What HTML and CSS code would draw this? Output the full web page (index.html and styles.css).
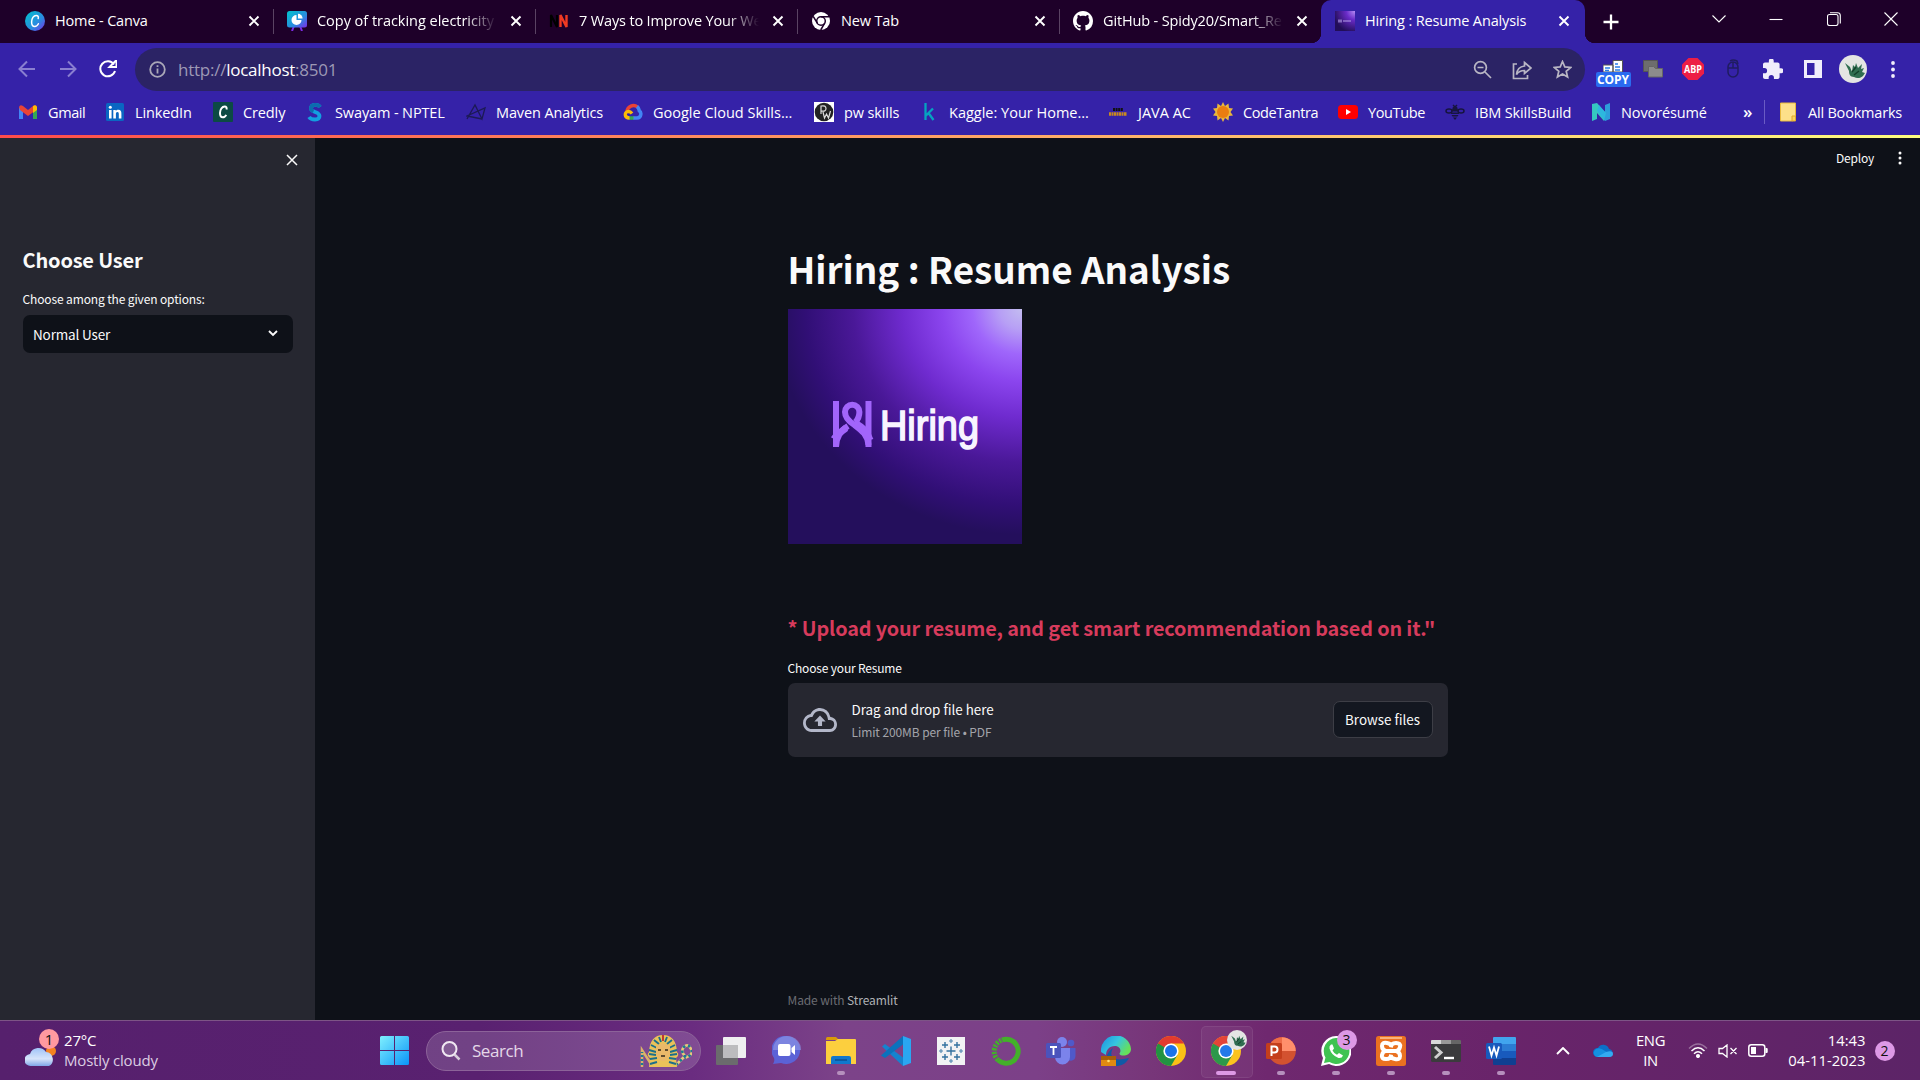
FILE: index.html
```html
<!DOCTYPE html>
<html lang="en">
<head>
<meta charset="utf-8">
<title>Hiring : Resume Analysis</title>
<link rel="stylesheet" href="styles.css">
</head>
<body>
<svg class="defs" width="0" height="0">
  <defs>
    <symbol id="close" viewBox="0 0 12 12"><path d="M1.5 1.5l9 9M10.5 1.5l-9 9" stroke="currentColor" stroke-width="1.9" fill="none"/></symbol>
    <symbol id="chrome" viewBox="0 0 30 30">
      <circle cx="15" cy="15" r="15" fill="#fbc116"/>
      <path d="M2 7.5A15 15 0 0 1 28 7.5H15L8.5 18.7z" fill="#e33b2e"/>
      <path d="M2 7.5A15 15 0 0 0 15 30l6.5-11.2L15 15z" fill="#229342"/>
      <circle cx="15" cy="15" r="7.6" fill="#fff"/><circle cx="15" cy="15" r="6" fill="#1a73e8"/>
    </symbol>
    <symbol id="dragon" viewBox="0 0 28 28">
      <circle cx="14" cy="14" r="14" fill="#e4e5e3"/>
      <path d="M6 8l5 4 2 5 1-7 2 2 1-4 2 5 4-4-1 5 3-1-2 4 3 1-2 3c-2 2-6 3-9 1-4 0-5-3-5-6z" fill="#2f6d50"/>
      <path d="M13 17l4-5M15 20l5-4" stroke="#123f2a" stroke-width="1.4"/>
    </symbol>
  </defs>
</svg>

<header class="browser">
  <div class="tabs">
    <div class="tab">
      <svg class="fav" viewBox="0 0 20 20"><defs><linearGradient id="cv" x1="0" y1="0" x2="1" y2="1"><stop offset="0" stop-color="#00c4cc"/><stop offset=".6" stop-color="#2a8be0"/><stop offset="1" stop-color="#7d2ae8"/></linearGradient></defs><circle cx="10" cy="10" r="10" fill="url(#cv)"/><path d="M13.2 7.6c.6-2-.4-3.2-2-3.2C8.5 4.4 6.6 7.6 6.600 11c0 2.700 1.200 4.500 3.100 4.500 1.700 0 3-1.200 3.700-2.700" stroke="#fff" stroke-width="1.5" fill="none" stroke-linecap="round"/></svg>
      <span class="tab-title">Home - Canva</span><svg class="tab-x"><use href="#close"/></svg>
    </div>
    <div class="tab">
      <svg class="fav" viewBox="0 0 20 20"><path d="M7 15l-2 5M13 15l2 5" stroke="#7d2ae8" stroke-width="2"/><rect width="20" height="16.5" rx="2.5" fill="url(#cv)"/><path d="M9.5 4v5h5a5 5 0 1 1-5-5z" fill="#fff"/><path d="M11 2.800a4.600 4.600 0 0 1 4.600 4.600H11z" fill="#fff"/></svg>
      <span class="tab-title fade wide">Copy of tracking electricity</span><svg class="tab-x"><use href="#close"/></svg>
    </div>
    <div class="tab">
      <svg class="fav" viewBox="0 0 20 20"><path d="M2 16V4l6 12V4" stroke="#000" stroke-width="2.2" fill="none"/><path d="M11.5 16V4l6 12V4" stroke="#f03a22" stroke-width="2.4" fill="none"/></svg>
      <span class="tab-title fade">7 Ways to Improve Your We</span><svg class="tab-x"><use href="#close"/></svg>
    </div>
    <div class="tab">
      <svg class="fav" viewBox="0 0 20 20"><circle cx="10" cy="10" r="9" fill="#fff"/><circle cx="10" cy="10" r="4.300" fill="#fff" stroke="#1e0029" stroke-width="1.5"/><path d="M10 5.700h8M6.300 12.200L2.200 5.300M13.700 12.200L9.700 19" stroke="#1e0029" stroke-width="1.5"/></svg>
      <span class="tab-title">New Tab</span><svg class="tab-x"><use href="#close"/></svg>
    </div>
    <div class="tab">
      <svg class="fav" viewBox="0 0 16 16"><path fill="#fff" d="M8 0C3.580 0 0 3.580 0 8c0 3.540 2.290 6.530 5.470 7.590.4.070.55-.17.55-.38 0-.19-.01-.82-.01-1.490-2.010.37-2.530-.49-2.690-.94-.09-.23-.48-.94-.82-1.130-.28-.15-.68-.52-.01-.53.63-.01 1.080.58 1.230.82.72 1.210 1.870.87 2.330.66.07-.52.28-.87.51-1.070-1.780-.2-3.640-.89-3.640-3.950 0-.87.31-1.590.82-2.150-.08-.2-.36-1.020.08-2.120 0 0 .67-.21 2.200.82.64-.18 1.320-.27 2-.27s1.360.09 2 .27c1.530-1.040 2.200-.82 2.200-.82.44 1.100.16 1.920.08 2.120.51.56.82 1.270.82 2.150 0 3.070-1.870 3.750-3.650 3.950.29.25.54.73.54 1.480 0 1.070-.01 1.930-.01 2.200 0 .21.15.46.55.38A8.010 8.010 0 0 0 16 8c0-4.420-3.580-8-8-8z"/></svg>
      <span class="tab-title fade">GitHub - Spidy20/Smart_Re</span><svg class="tab-x"><use href="#close"/></svg>
    </div>
    <div class="tab active">
      <svg class="fav" viewBox="0 0 20 20"><defs><radialGradient id="lg" cx="1" cy="0" r="1.100"><stop offset="0" stop-color="#b48cf5"/><stop offset=".4" stop-color="#6a2bc8"/><stop offset="1" stop-color="#220e58"/></radialGradient></defs><rect width="20" height="20" fill="url(#lg)"/><path d="M4 8.500v3M6 8.500v3M8 10h8" stroke="#b59fe8" stroke-width="1.2"/></svg>
      <span class="tab-title">Hiring : Resume Analysis</span><svg class="tab-x"><use href="#close"/></svg>
    </div>
    <div class="new-tab"><svg width="16" height="16" viewBox="0 0 16 16"><path d="M8 .5v15M.5 8h15" stroke="#fff" stroke-width="2.3"/></svg></div>
    <div class="win-controls">
      <svg width="14" height="14" viewBox="0 0 14 14"><path d="M.5 3.5L7 10l6.5-6.5"/></svg>
      <svg width="14" height="14" viewBox="0 0 14 14"><path d="M.5 7.500h13"/></svg>
      <svg width="14" height="14" viewBox="0 0 14 14"><rect x=".5" y="2.5" width="10.5" height="11" rx="2"/><path d="M3 .7h7.500q2.800 0 2.800 2.800v8"/></svg>
      <svg width="14" height="14" viewBox="0 0 14 14"><path d="M.5.5l13 13M13.5.5l-13 13"/></svg>
    </div>
  </div>

  <div class="toolbar">
    <div class="nav">
      <svg class="dim" width="18" height="18" viewBox="0 0 18 18"><path d="M17 9H2M9 1.500L1.500 9 9 16.500"/></svg>
      <svg class="dim" width="18" height="18" viewBox="0 0 18 18"><path d="M1 9h15M9 1.500L16.500 9 9 16.500"/></svg>
      <svg class="reload" width="18" height="18" viewBox="0 0 18 18"><path d="M15 4.500A7.500 7.500 0 1 0 16 11"/><path d="M17.500 0v7H10.500z" fill="#fff" stroke="none"/></svg>
    </div>
    <div class="omnibox">
      <svg class="info" width="17" height="17" viewBox="0 0 17 17"><circle cx="8.500" cy="8.500" r="7.300"/><path d="M8.500 7.500v5M8.500 4.300v1.700"/></svg>
      <span class="url">http://<b>localhost</b>:8501</span>
      <div class="omni-actions">
        <svg width="19" height="19" viewBox="0 0 19 19"><circle cx="7.500" cy="7.500" r="5.900"/><path d="M12 12l6 6M4.500 7.500h6"/></svg>
        <svg width="20" height="20" viewBox="0 0 20 20"><path d="M5 4H1.500v14.500h14V15M12.500 2.500L19 8l-6.500 5.500V10.500c-4 0-6 1-8 4 .5-5 3.500-8 8-8.500z"/></svg>
        <svg width="19" height="19" viewBox="0 0 19 19"><path d="M9.500 1.500l2.300 5.400 5.900.5-4.500 3.900 1.400 5.700-5.100-3-5.100 3 1.400-5.700-4.500-3.900 5.900-.5z"/></svg>
      </div>
    </div>
    <div class="exts">
      <div class="copy"><svg width="20" height="12" viewBox="0 0 20 12"><path d="M0 5h10v7H0zM10 .5h9.500v11.500H10z" fill="#fff" stroke="#555" /><path d="M2 8h5M2 10.500h4M12 4h3M12 7h5M12 10h5" stroke="#2a7de8" stroke-width="1.4"/></svg><span>COPY</span></div>
      <svg width="20" height="18" viewBox="0 0 20 18"><path d="M.5.500h14v11H.5z" fill="#6d6d6d" stroke="#555"/><path d="M5.500 6.500h5l2 2h7v8.500h-14z" fill="#8c8c8c" stroke="#666"/></svg>
      <svg width="22" height="22" viewBox="0 0 22 22"><path d="M6.500 0h9L22 6.500v9L15.500 22h-9L0 15.500v-9z" fill="#ed1e45"/><text x="11" y="14.700" class="abp" textLength="18" lengthAdjust="spacingAndGlyphs">ABP</text></svg>
      <svg width="14" height="20" viewBox="0 0 14 20"><path d="M2 8a5 5 0 0 1 10 0v5a5 5 0 0 1-10 0zM2 9h10M7 3v6M4 2q3-2 7 0l1 3" fill="none" stroke="#1f1c60" stroke-width="1.5"/></svg>
      <svg width="20" height="20" viewBox="2 1.500 20.500 20.500"><path fill="#f1eefb" d="M20.500 11H19V7c0-1.100-.9-2-2-2h-4V3.500a2.500 2.500 0 0 0-5 0V5H4c-1.100 0-2 .9-2 2v3.800h1.500a2.700 2.700 0 0 1 0 5.400H2V20c0 1.100.9 2 2 2h3.800v-1.500a2.700 2.700 0 0 1 5.400 0V22H17c1.100 0 2-.9 2-2v-4h1.500a2.500 2.500 0 0 0 0-5z"/></svg>
      <svg width="18" height="18" viewBox="0 0 18 18"><path fill="#f1eefb" fill-rule="evenodd" d="M0 0h18v18H0zM3 3v12h7.500V3z"/></svg>
      <svg width="28" height="28"><use href="#dragon"/></svg>
      <svg width="4" height="17" viewBox="0 0 4 17"><g fill="#f1eefb"><circle cx="2" cy="2" r="1.900"/><circle cx="2" cy="8.500" r="1.900"/><circle cx="2" cy="15" r="1.900"/></g></svg>
    </div>
  </div>

  <div class="bookmarks">
    <div class="bm"><svg viewBox="0 0 20 20"><path d="M1 17V5l4 3v9z" fill="#4285f4"/><path d="M19 17V5l-4 3v9z" fill="#34a853"/><path d="M1 5q1-3 4-1l5 4 5-4q3-2 4 1l-1 3-8 6-8-6z" fill="#ea4335"/><path d="M15 4q3-2 4 1v3l-4 3z" fill="#fbbc04"/></svg>Gmail</div>
    <div class="bm"><svg viewBox="0 0 20 20"><rect x="1" y="1" width="18" height="18" rx="1.5" fill="#0a66c2"/><path d="M4 8h2.600v8.500H4zM8.300 8h2.500v1.200c.5-.9 1.400-1.400 2.500-1.400 2.600 0 3.100 1.700 3.100 3.900v4.800h-2.600v-4.300c0-1.100 0-2.300-1.400-2.300s-1.500 1.100-1.500 2.200v4.400H8.300z" fill="#fff"/><circle cx="5.300" cy="5.300" r="1.500" fill="#fff"/></svg>LinkedIn</div>
    <div class="bm"><svg viewBox="0 0 20 20"><rect width="20" height="20" rx="1" fill="#0c4a44"/><path d="M13.500 7.500c.5-2-.3-3-1.800-3C9 4.500 7 7.700 7 11c0 2.700 1 4.300 2.700 4.300 1.500 0 2.800-1 3.500-2.500" stroke="#fff" stroke-width="2" fill="none"/></svg>Credly</div>
    <div class="bm"><svg viewBox="0 0 20 20"><path d="M15 5C13 2 6 2 6 6.500S14.500 9 14.500 14 6 18 4 15" stroke="#139fe0" stroke-width="3.800" fill="none"/><path d="M15 5C13 2 6 2 6 6.500q0 2 2.500 2.800" stroke="#0c6cae" stroke-width="3.800" fill="none"/></svg>Swayam - NPTEL</div>
    <div class="bm"><svg viewBox="0 0 20 20"><path d="M1 17L9 3l7 14L19 6 1 14l15 3" stroke="#1c1a55" stroke-width="1.3" fill="none"/></svg>Maven Analytics</div>
    <div class="bm"><svg viewBox="0 0 20 20"><path d="M4 9.500A6.500 6.500 0 0 1 14.500 5" stroke="#ea4335" stroke-width="3.5" fill="none"/><path d="M14 4.500c2 1.500 2 3.500 2.300 4.300 2.200 1 2.500 7.200-2.300 7.200h-4" stroke="#4285f4" stroke-width="3.5" fill="none"/><path d="M10.500 16H6" stroke="#34a853" stroke-width="3.5"/><path d="M6.500 16C1 16 1 9.500 5.500 9.500q2 0 3.500 2" stroke="#fbbc05" stroke-width="3.3" fill="none"/></svg><span class="wide">Google Cloud Skills...</span></div>
    <div class="bm"><svg viewBox="0 0 20 20"><rect width="20" height="20" fill="#fff"/><circle cx="10" cy="10" r="9.300" fill="#222"/><path d="M7 12V4q5-1 5 2.500T7 9M9 10l1.500 6 2-4 2 4L16.500 9" stroke="#ddd" stroke-width="1.2" fill="none"/></svg>pw skills</div>
    <div class="bm"><svg viewBox="0 0 20 20"><path d="M6.500 1v17M14 6.500l-7 7M9.500 11l5 7" stroke="#06a3c0" stroke-width="2.3" fill="none"/></svg><span class="wide">Kaggle: Your Home...</span></div>
    <div class="bm"><svg viewBox="0 0 20 20"><path d="M5 7.500h10" stroke="#111" stroke-width="3" stroke-dasharray="2 .6"/><path d="M1 12h18" stroke="#c98a1e" stroke-width="3.4" stroke-dasharray="2 .5"/></svg><span class="wide">JAVA AC</span></div>
    <div class="bm"><svg viewBox="0 0 20 20"><path d="M10 0l2 4 3.500-2.500L16 6l4 .5L17.500 10l2.500 3.500-4 .5-.5 4.500L12 16l-2 4-2-4-3.500 2.500L4 14l-4-.5L2.500 10 0 6.500 4 6l.5-4.500L8 4z" fill="#e9b63c"/><circle cx="10" cy="10" r="6" fill="#ea7d10"/></svg><span class="tight">CodeTantra</span></div>
    <div class="bm"><svg viewBox="0 0 20 20"><rect y="3" width="20" height="14" rx="3.5" fill="#f00"/><path d="M8 7v6l5-3z" fill="#fff"/></svg><span class="tight">YouTube</span></div>
    <div class="bm"><svg viewBox="0 0 20 20"><g fill="none" stroke="#17153f" stroke-width="1.5"><path d="M8 3l2 2 2-2"/><ellipse cx="4" cy="9" rx="3" ry="2"/><ellipse cx="16" cy="9" rx="3" ry="2"/></g><path d="M10 4.500q3 0 2.500 2.500l1.500 1.500v1H6v-1L7.500 7Q7 4.500 10 4.500zM6 10.500h8v1.500H6zM6.500 13h7l-1 1.500h-5zM8 15.500h4L10 18z" fill="#17153f"/></svg>IBM SkillsBuild</div>
    <div class="bm"><svg viewBox="0 0 20 20"><path d="M1 2l5-1 9 10-2 8L6 11v6l-5 2z" fill="#35c8c0"/><path d="M14 3l5-2v16l-5 2L6 9l2-6 6 7z" fill="#2bb4e4" opacity=".85"/></svg>Novorésumé</div>
    <span class="more">»</span>
    <div class="all"><svg viewBox="0 0 20 20"><path d="M2.500 1h15v13l-3 5h-12z" fill="#fde08a" stroke="#e8b93c"/><path d="M14 19v-5h3.500v5z" fill="#fbd35c" stroke="#e0a92c"/></svg>All Bookmarks</div>
  </div>
</header>

<div class="app">
  <aside class="sidebar">
    <svg class="side-x" width="12" height="12" viewBox="0 0 12 12"><path d="M1 1l10 10M11 1L1 11" stroke="#fafafa" stroke-width="1.5"/></svg>
    <h2>Choose User</h2>
    <label>Choose among the given options:</label>
    <div class="select">Normal User<svg width="10" height="7" viewBox="0 0 10 7"><path d="M1 1l4 4 4-4" stroke="#fafafa" stroke-width="1.9" fill="none"/></svg></div>
  </aside>
  <main>
    <div class="app-bar"><span>Deploy</span><svg width="4" height="14" viewBox="0 0 4 14"><g fill="#fafafa"><circle cx="2" cy="2" r="1.500"/><circle cx="2" cy="7" r="1.500"/><circle cx="2" cy="12" r="1.500"/></g></svg></div>
    <section class="content">
      <h1>Hiring : Resume Analysis</h1>
      <div class="logo">
        <svg width="234" height="235" viewBox="0 0 234 235">
          <g fill="none" stroke="#a265fb" stroke-width="6">
            <path d="M48 92v46M80.500 92v46"/>
            <path d="M48 138c0-10 4-16 12-21"/>
            <path d="M46 130c3-5 7-7 12-11" stroke-width="7"/>
            <path d="M80.500 136c-1-10-6-14-14-20-8-5-9.500-9-9.500-13a7.200 7.200 0 0 1 14.400 0c0 4-1 7-4 10"/>
            <path d="M67 114c8 5 12 8 15 17" stroke-width="7"/>
          </g>
          <text x="92" y="131" textLength="99" lengthAdjust="spacingAndGlyphs" class="logo-text">Hiring</text>
        </svg>
      </div>
      <h3>* Upload your resume, and get smart recommendation based on it."</h3>
      <label>Choose your Resume</label>
      <div class="uploader">
        <svg width="34" height="24" viewBox="0 4 24 16" preserveAspectRatio="none"><path fill="#b3b7c9" d="M19.350 10.040A7.490 7.490 0 0 0 12 4C9.110 4 6.600 5.640 5.350 8.040A5.994 5.994 0 0 0 0 14c0 3.310 2.690 6 6 6h13c2.760 0 5-2.240 5-5 0-2.640-2.050-4.780-4.650-4.960zM19 18H6c-2.210 0-4-1.790-4-4 0-2.050 1.530-3.760 3.560-3.970l1.070-.11.5-.95A5.469 5.469 0 0 1 12 6c2.620 0 4.880 1.860 5.390 4.430l.3 1.500 1.530.11A2.980 2.980 0 0 1 22 15c0 1.650-1.350 3-3 3zM8 13h2.550v3h2.900v-3H16l-4-4z"/></svg>
        <div class="drop"><span>Drag and drop file here</span><small>Limit 200MB per file • PDF</small></div>
        <button>Browse files</button>
      </div>
      <footer>Made with <b>Streamlit</b></footer>
    </section>
  </main>
</div>

<div class="taskbar">
  <div class="weather">
    <svg width="32" height="36" viewBox="0 0 32 36"><defs><linearGradient id="cl" x1="0" y1="0" x2="0" y2="1"><stop offset="0" stop-color="#9fc3f7"/><stop offset=".6" stop-color="#d7e4fa"/><stop offset="1" stop-color="#7fa6e8"/></linearGradient></defs><circle cx="26" cy="18" r="5" fill="#f58220"/><path d="M6 33a6 6 0 0 1-1-12 9 9 0 0 1 16-2 7.500 7.500 0 0 1 3 14z" fill="url(#cl)"/></svg>
    <span class="w-badge">1</span>
    <div class="w-text">27°C<br><em>Mostly cloudy</em></div>
  </div>
  <svg class="start" width="29" height="29" viewBox="0 0 29 29"><defs><linearGradient id="ws" x1="0" y1="0" x2="1" y2="1"><stop offset="0" stop-color="#7ff0fe"/><stop offset="1" stop-color="#0a94f8"/></linearGradient></defs><path d="M0 1.500Q0 0 1.500 0H14v14H0zM15 0h12.500Q29 0 29 1.500V14H15zM0 15h14v14H1.500Q0 29 0 27.500zM15 15h14v12.500q0 1.500-1.500 1.500H15z" fill="url(#ws)"/></svg>
  <div class="search">
    <svg width="20" height="20" viewBox="0 0 20 20"><circle cx="8.500" cy="8" r="7" stroke="#f0e8f2" stroke-width="2" fill="#ffffff22"/><path d="M13.500 13.500l5 5" stroke="#d9cedc" stroke-width="2.5"/></svg>
    <span>Search</span>
    <svg class="pharaoh" width="52" height="34" viewBox="0 0 52 34"><path d="M2 33V16l9 14" stroke="#d9b36a" stroke-width="2.5" fill="none"/><path d="M2 31V18" stroke="#1b7c94" stroke-width="2.5" stroke-dasharray="2 2"/><path d="M36 31l9-9q-5-5-1-9t7 2-6 9" stroke="#e8c97a" stroke-width="2.6" fill="none"/><path d="M36 31l9-9q-5-5-1-9t7 2-6 9" stroke="#1b7c94" stroke-width="2.6" fill="none" stroke-dasharray="2.5 3"/><path d="M10 24q-4-3-1-6Q10 1 23 1t14 17q3 3-1 6l1 9H9z" fill="#e9c25a"/><g stroke="#1c6f8a" stroke-width="1.9"><path d="M14 6l5 4M11 11l6 3M9 16l7 2M9 20l7 1M10 25l7-1M10 30l7-2M32 6l-5 4M35 11l-6 3M37 16l-7 2M37 20l-7 1M36 25l-7-1M36 30l-7-2M19 3l2 5M27 3l-2 5"/></g><path d="M16 12q7-5 14 0v9q-3 6-7 6t-7-6z" fill="#e9b969"/><path d="M18 16h3M25 16h3M21 22h4" stroke="#332a1c" stroke-width="1.5"/><path d="M22 1h2v6h-2z" fill="#c23b2e"/></svg>
  </div>
  <div class="apps">
    <div class="app-i"><svg width="30" height="28" viewBox="0 0 30 28"><rect y="8" width="22" height="20" rx="1" fill="#6b6b6d"/><rect x="7" width="23" height="21" rx="1" fill="#efeff0"/><path d="M7 8h15v13H7z" fill="#bcbcbe"/></svg></div>
    <div class="app-i"><svg width="29" height="29" viewBox="0 0 29 29"><path d="M15 0a14 14 0 1 1-6 27l-8 1q2-3 1-6A14 14 0 0 1 15 0z" fill="#5b62d6"/><path d="M15 0A14 14 0 0 1 29 14H1A14 14 0 0 1 15 0z" fill="#8a93e4" opacity=".7"/><rect x="6" y="8" width="12.5" height="12" rx="2" fill="#fff"/><path d="M19.500 12l3.500-3v10l-3.500-3z" fill="#fff"/></svg></div>
    <div class="app-i run"><svg width="30" height="27" viewBox="0 0 30 27"><path d="M0 1.500Q0 0 1.500 0H10l3 3H0z" fill="#d99a08"/><path d="M0 4h9l3-2h17q1 0 1 1v24H0z" fill="#fccf3e"/><path d="M5 27v-6q0-2 2-2h16q2 0 2 2v6z" fill="#1178cc"/><path d="M9 23h12" stroke="#0b4f92" stroke-width="1.5"/></svg></div>
    <div class="app-i"><svg width="30" height="30" viewBox="0 0 30 30"><path d="M22 30L1 10.500 4 8l18 13.500z" fill="#1583cf"/><path d="M22 0v8.500L4 22l-4-2.500z" fill="#0b72bd"/><path d="M22 0l8 3v24l-8 3z" fill="#2aa7f2"/></svg></div>
    <div class="app-i"><svg width="28" height="28" viewBox="0 0 28 28"><rect width="28" height="28" fill="#f2f2f4"/><path d="M14 9.500v9M9.500 14h9" stroke="#c7663a" stroke-width="0"/><path d="M14 9.500v9M9.500 14h9M8 5v6M5 8h6M20 5v6M17 8h6M8 17v6M5 20h6M20 17v6M17 20h6" stroke="#33719f" stroke-width="1.4"/><path d="M14 2v4M12 4h4M14 22v4M12 24h4M4 12v4M2 14h4M24 12v4M22 14h4" stroke="#4f86b0" stroke-width="1.1"/></svg></div>
    <div class="app-i"><svg width="30" height="30" viewBox="0 0 30 30"><path d="M11 4a12 12 0 1 1-4 20" stroke="#43b02a" stroke-width="5" fill="none"/><path d="M7 24A12 12 0 0 1 11 4" stroke="#43b02a" stroke-width="5" fill="none" stroke-dasharray="2.2 1.3"/></svg></div>
    <div class="app-i"><svg width="30" height="28" viewBox="0 0 30 28"><circle cx="16" cy="5" r="5" fill="#7b83eb"/><circle cx="25" cy="6" r="3.300" fill="#5059c9"/><path d="M20 11h9.500v8a5 5 0 0 1-9.500 2z" fill="#5059c9"/><path d="M9 11h15v9a7.500 7.500 0 0 1-15 0z" fill="#7b83eb"/><rect y="6" width="15" height="15" rx="1.5" fill="#4b53bc"/><path d="M4 10h7M7.500 10v8" stroke="#fff" stroke-width="1.8"/></svg></div>
    <div class="app-i"><svg width="30" height="30" viewBox="0 0 30 30"><defs><linearGradient id="ed" x1="0" y1="0" x2="1" y2=".5"><stop offset="0" stop-color="#1c8de0"/><stop offset=".55" stop-color="#35c6e0"/><stop offset="1" stop-color="#66e05a"/></linearGradient></defs><path d="M12 12c-5 9 1 14 16 10-3 6-8 8-13 8C6 30 1 20 12 12z" fill="#0f5aa6"/><path d="M0 16A15 15 0 0 1 30 13c0 5-5 7-9 6.500-2.500-.5-3-1.500-2-3 1.500-3-1-6.500-5-6.500-6 0-9 4-9 9z" fill="url(#ed)"/><path d="M0 20h15v10H0z" fill="#e08a12"/><path d="M0 20h15v4H0z" fill="#a85e08"/><circle cx="7.500" cy="25" r="1.300" fill="#ffe070"/></svg></div>
    <div class="app-i"><svg width="30" height="30"><use href="#chrome"/></svg></div>
    <div class="app-i current"><svg width="30" height="30"><use href="#chrome"/></svg><svg class="over" width="20" height="20"><use href="#dragon"/></svg></div>
    <div class="app-i run"><svg width="30" height="28" viewBox="0 0 30 28"><circle cx="16" cy="14" r="13.800" fill="#d35230"/><path d="M16 .2A13.800 13.800 0 0 1 29.800 14H16z" fill="#ff8f6b"/><path d="M16 .2V14H2.200A13.800 13.800 0 0 1 16 .2z" fill="#ed6c47"/><rect y="6" width="16" height="16" rx="1.5" fill="#c43e1c"/><path d="M5.500 19V9.500h3q3 0 3 3t-3 3h-3" stroke="#fff" stroke-width="2" fill="none"/></svg></div>
    <div class="app-i run"><svg width="30" height="30" viewBox="0 0 30 30"><path d="M15 0a15 15 0 1 1-7 28L0 30l2-8A15 15 0 0 1 15 0z" fill="#fff"/><path d="M15 2a13 13 0 1 1-6.500 24L3 27l1.500-5.500A13 13 0 0 1 15 2z" fill="#3fc351"/><path d="M10 8.500q-2 1.500-1.500 4 2 7 9 9.500 3.500.5 4.500-2.500l-4-2.500-2 1.800q-3-1.300-4.500-4.300l1.500-2-1.500-4z" fill="#fff"/></svg><span class="num">3</span></div>
    <div class="app-i run"><svg width="30" height="30" viewBox="0 0 30 30"><rect width="30" height="30" rx="2.500" fill="#ea7120"/><path d="M4 2h22" stroke="#f7b37c" stroke-width="2"/><path d="M10 15q-4-1-4-5t5-3 4 4h0q0-4 5-4t4 4-4 4q4 1 4 5t-5 3-4-4q0 4-5 4t-4-4 4-4zM10 15h10" stroke="#fff" stroke-width="4" fill="none"/></svg></div>
    <div class="app-i run"><svg width="30" height="22" viewBox="0 0 30 22"><rect width="30" height="22" rx="1.500" fill="#3b3b3d"/><path d="M0 4V1q0-1 1-1h9v4z" fill="#d8d8d8"/><path d="M10 0h10v4H10z" fill="#999"/><path d="M20 0h9q1 0 1 1v3H20z" fill="#666"/><path d="M4 7l6 5.500L4 18" stroke="#cfcfcf" stroke-width="3" fill="none"/><path d="M13 18h10" stroke="#fff" stroke-width="2.4"/></svg></div>
    <div class="app-i run"><svg width="30" height="28" viewBox="0 0 30 28"><path d="M7 1q0-1 1-1h21q1 0 1 1v6H7z" fill="#41a5ee"/><path d="M7 7h23v7H7z" fill="#2b7cd3"/><path d="M7 14h23v7H7z" fill="#185abd"/><path d="M7 21h23v6q0 1-1 1H8q-1 0-1-1z" fill="#103f91"/><rect y="6" width="16" height="16" rx="1.5" fill="#185abd"/><path d="M3 9.500l2.500 9L8 10.500l2.500 8 2.500-9" stroke="#fff" stroke-width="1.8" fill="none"/></svg></div>
  </div>
  <div class="tray">
    <svg class="up" width="14" height="8" viewBox="0 0 14 8"><path d="M1 7l6-6 6 6" stroke="#fff" stroke-width="1.9" fill="none"/></svg>
    <svg class="cloud" width="20" height="13" viewBox="0 0 20 13"><path d="M5 4a6 6 0 0 1 11 1 4 4 0 0 1-1 8H4A4.500 4.500 0 0 1 5 4z" fill="#0c6fc8"/><path d="M2 12q-3-4 1-7 4-2 9 2l7 4q-1 2-4 2H4z" fill="#1490e0"/><path d="M4 13l9-5q7-2 7 2 0 3-4 3z" fill="#33abf2"/></svg>
    <div class="lang">ENG<br>IN</div>
    <svg class="wifi" width="20" height="15" viewBox="0 0 20 15" fill="none" stroke="#fff" stroke-width="1.5"><path d="M1 5.500q9-9 18 0" opacity=".35"/><path d="M3.500 8q6.500-6.500 13 0M6 10.700q4-4 8 0"/><circle cx="10" cy="13" r="1.300" fill="#fff"/></svg>
    <svg class="vol" width="20" height="14" viewBox="0 0 20 14" fill="none" stroke="#fff" stroke-width="1.3"><path d="M1 4.500h3.500L9 1v12L4.500 9.500H1zM12.500 4l6 6M18.500 4l-6 6"/></svg>
    <svg class="bat" width="20" height="13" viewBox="0 0 20 13"><rect x=".8" y=".8" width="16" height="11.4" rx="2.5" fill="none" stroke="#fff" stroke-width="1.5"/><rect x="3" y="3" width="5" height="7" fill="#fff"/><path d="M17.500 4h1.200q1 0 1 1v3q0 1-1 1h-1.200z" fill="#fff"/></svg>
    <div class="clock">14:43<br>04-11-2023</div>
    <span class="num2">2</span>
  </div>
</div>
</body>
</html>
```
FILE: styles.css
```css
* { box-sizing: border-box; }
html, body { margin: 0; height: 100%; }
body {
  display: flex;
  flex-direction: column;
  width: 1920px;
  height: 1080px;
  overflow: hidden;
  background: #0e1118;
  font-family: "Open Sans", "Noto Sans", sans-serif;
  color: #fff;
  white-space: nowrap;
}
.defs { position: absolute; }
svg { display: block; flex: none; }

/* Browser chrome */
.browser { height: 138px; flex: none; background: #3522a8; }
.tabs { display: flex; height: 43px; padding-left: 11px; background: #1e0029; }
.tab {
  position: relative;
  display: flex;
  align-items: center;
  width: 262px;
  padding: 0 0 1px 14px;
  font-size: 14.5px;
  letter-spacing: -0.15px;
}
.tab + .tab:not(.active)::before {
  content: "";
  position: absolute;
  left: 0;
  top: 9px;
  width: 1px;
  height: 25px;
  background: #5a4363;
}
.fav { width: 20px; height: 20px; }
.tab-title { width: 180px; margin: 0 13px 0 10px; padding-bottom: 1px; overflow: hidden; }
.tab-title.wide { letter-spacing: -0.03px; }
.fade { -webkit-mask-image: linear-gradient(90deg, #000 148px, transparent 180px); }
.tab-x { width: 12px; height: 12px; color: #fff; }
.active { width: 264px; background: #3522a8; border-radius: 10px 10px 0 0; }
.active::before, .active::after {
  content: "";
  position: absolute;
  bottom: 0;
  width: 10px;
  height: 10px;
}
.active::before { left: -10px; background: radial-gradient(circle at 0 0, #1e0029 10px, #3522a8 10.5px); }
.active::after { right: -10px; background: radial-gradient(circle at 100% 0, #1e0029 10px, #3522a8 10.5px); }
.new-tab { width: 52px; display: grid; place-items: center; }
.win-controls {
  display: grid;
  grid-template-columns: repeat(4, 57.5px);
  margin-left: 53px;
  height: 37px;
  place-items: center;
}
.win-controls path, .win-controls rect { fill: none; stroke: #fff; stroke-width: 1.1; }

.toolbar { display: flex; height: 53px; padding-top: 5px; }
.nav {
  width: 135px;
  height: 42px;
  display: grid;
  grid-template-columns: repeat(3, 40.5px);
  padding-left: 7px;
  place-items: center;
}
.nav path { fill: none; stroke: #fff; stroke-width: 2; }
.nav .dim path { stroke: #8a7fd0; }
.omnibox {
  display: flex;
  align-items: center;
  width: 1450px;
  height: 43px;
  padding: 0 3px 0 14px;
  border-radius: 22px;
  background: #2b2365;
}
.info path, .info circle { fill: none; stroke: #aaa8b8; stroke-width: 1.8; }
.url { margin-left: 12px; font-size: 17px; color: #9d99b5; letter-spacing: -0.25px; }
.url b { font-weight: 400; color: #fff; }
.omni-actions {
  display: grid;
  grid-template-columns: repeat(3, 40px);
  margin-left: auto;
  place-items: center;
}
.omni-actions path, .omni-actions circle { fill: none; stroke: #b9b6c4; stroke-width: 1.7; }
.exts {
  display: grid;
  grid-template-columns: repeat(8, 40px);
  margin-left: 8px;
  height: 42px;
  place-items: center;
}
.copy { display: flex; flex-direction: column; align-items: center; padding-top: 9px; }
.copy span {
  width: 35px;
  height: 15px;
  border-radius: 2px;
  background: #2a6bf0;
  font: 700 12px/15px "Open Sans", sans-serif;
  text-align: center;
}
.abp { font: 700 10px "Open Sans", sans-serif; fill: #fff; text-anchor: middle; }

.bookmarks {
  display: grid;
  grid-template-columns: 87px 108px 92px 161px 157px 191px 105px 189px 105px 125px 107px 146px 143px 30px 1fr;
  height: 42px;
  padding: 0 0 7px 18px;
  align-items: center;
  border-bottom: 3px solid;
  border-image: linear-gradient(90deg, #ff4b4b, #fffd80) 1;
  font-size: 14.5px;
  letter-spacing: -0.12px;
}
.bm { display: flex; align-items: center; gap: 10px; }
.bm .wide { letter-spacing: 0; }
.bm .tight { letter-spacing: -0.38px; }
.bm:first-child { letter-spacing: -0.4px; }
.bm svg, .all svg { width: 20px; height: 20px; }
.more { padding-left: 9px; font-weight: 600; font-size: 17px; line-height: 20px; }
.all { display: flex; align-items: center; gap: 10px; height: 24px; padding-left: 13px; border-left: 1px solid #6a5bc4; letter-spacing: -0.2px; }

/* Streamlit page */
.app { display: flex; flex: 1; min-height: 0; font-family: "Noto Sans CJK JP", "Noto Sans", sans-serif; color: #fafafa; }
.app h1, .app h2, .app h3 { margin: 0; }
.app label { display: block; }
.sidebar { width: 315px; padding: 16px 22px 0 22.5px; background: #262730; }
.side-x { margin: 0 -5px 0 auto; }
.sidebar h2 { margin-top: 80px; font-size: 20px; line-height: 28px; letter-spacing: -0.18px; }
.sidebar label { margin-top: 15px; font-size: 12px; line-height: 20px; letter-spacing: -0.13px; }
.select {
  display: flex;
  align-items: center;
  justify-content: space-between;
  height: 38px;
  margin-top: 6px;
  padding: 0 15px 1px 10.5px;
  border-radius: 7px;
  background: #0e1118;
  font-size: 13.5px;
  line-height: 20px;
  letter-spacing: -0.15px;
}
main { display: flex; flex-direction: column; flex: 1; }
.app-bar {
  display: flex;
  justify-content: flex-end;
  align-items: center;
  gap: 24px;
  height: 42px;
  padding: 0 18px 3px 0;
  font-size: 12px;
  letter-spacing: -0.2px;
}
.content { display: flex; flex-direction: column; flex: 1; width: 660px; margin-left: 472.5px; }
.content h1 { margin-top: 61px; font-size: 36.8px; line-height: 54px; }
.logo {
  width: 234px;
  height: 235px;
  margin-top: 14px;
  background: radial-gradient(ellipse 106% 96% at 100% 0, #c3bdf0 0, #b79ff5 9%, #9f66fb 20%, #8b45ee 32%, #6f2bcf 48%, #4a1898 68%, #310f76 87%, #240f5c 100%);
}
.logo-text { font: 400 43px "Liberation Sans", sans-serif; fill: #f8f4ff; stroke: #f8f4ff; stroke-width: 1.6; }
.content h3 { margin-top: 69px; font-size: 19.8px; line-height: 30px; color: #d73b5c; font-weight: 600; letter-spacing: -0.12px; }
.content label { margin-top: 15px; font-size: 12px; line-height: 20px; letter-spacing: -0.17px; }
.uploader {
  display: flex;
  align-items: center;
  height: 74px;
  margin-top: 5px;
  padding: 0 15px 1px;
  border-radius: 7px;
  background: #262730;
}
.drop { display: flex; flex-direction: column; margin-left: 15px; font-size: 13.4px; line-height: 24px; }
.drop small { font-size: 12px; line-height: 22px; color: #a3a4aa; letter-spacing: -0.09px; }
.uploader button {
  margin-left: auto;
  width: 100px;
  height: 37px;
  padding: 0 0 1px;
  border: 1px solid #3d3e46;
  border-radius: 7px;
  background: #131720;
  color: #fafafa;
  font: 13.4px "Noto Sans CJK JP", sans-serif;
}
.content footer { margin: auto 0 9px; font-size: 12px; line-height: 22px; color: #6b6c72; letter-spacing: -0.11px; }
.content footer b { font-weight: 400; color: #b0b1b6; }

/* Windows taskbar */
.taskbar {
  display: flex;
  align-items: center;
  height: 60px;
  flex: none;
  border-top: 1px solid #7d5486;
  background: linear-gradient(90deg, #56206d 0, #592170 25%, #6a2c80 36%, #7c4389 44%, #7c4088 54%, #773679 60%, #6f286f 66%, #69246a 78%, #5c2467 100%);
  font-size: 15px;
  line-height: 20px;
  letter-spacing: -0.18px;
}
.weather { position: relative; display: flex; gap: 7px; width: 380px; padding-left: 25px; }
.weather svg { margin-top: 1px; }
.w-text { margin-top: -2px; }
.weather em { font-style: normal; color: #dccde2; }
.w-badge, .num, .num2 {
  border-radius: 50%;
  width: 20px;
  height: 20px;
  color: #111;
  text-align: center;
  line-height: 20px;
  letter-spacing: 0;
}
.w-badge { position: absolute; left: 39px; top: -3px; background: #ff99a0; }
.search {
  display: flex;
  align-items: center;
  width: 275px;
  height: 40px;
  margin-left: 17px;
  padding: 0 8px 0 14px;
  border: 1px solid #8c6399;
  border-radius: 20px;
  background: #ffffff26;
  font-size: 17px;
  letter-spacing: -0.45px;
  gap: 11px;
  color: #e4d8e8;
}
.pharaoh { margin-left: auto; }
.apps { display: grid; grid-template-columns: repeat(15, 55px); height: 60px; margin-left: 2.5px; }
.app-i { position: relative; display: grid; place-items: center; }
.run::after, .current::after {
  content: "";
  position: absolute;
  left: 23.5px;
  top: 50px;
  width: 8px;
  height: 4px;
  border-radius: 2px;
  background: #b690bd;
}
.current::after { left: 17.5px; width: 20px; background: #dd99e6; }
.current::before {
  content: "";
  position: absolute;
  left: 2px;
  top: 5px;
  width: 50px;
  height: 50px;
  border: 1px solid #ffffff12;
  border-radius: 5px;
  background: #ffffff0c;
}
.over { position: absolute; left: 28px; top: 9px; }
.num { position: absolute; left: 28px; top: 9px; background: #dd99e6; font-size: 14px; }
.tray { display: flex; align-items: center; margin-left: 27px; font-size: 14.8px; letter-spacing: -0.3px; }
.lang { width: 30px; margin: -1px 22px 0 23px; text-align: center; }
.cloud { margin-left: 23px; }
.vol { margin: 0 10px; }
.clock { width: 80px; margin: -1px 0 0 18px; text-align: right; letter-spacing: 0; }
.num2 { margin-left: 9px; background: #dd99e6; font-size: 14px; }
```
